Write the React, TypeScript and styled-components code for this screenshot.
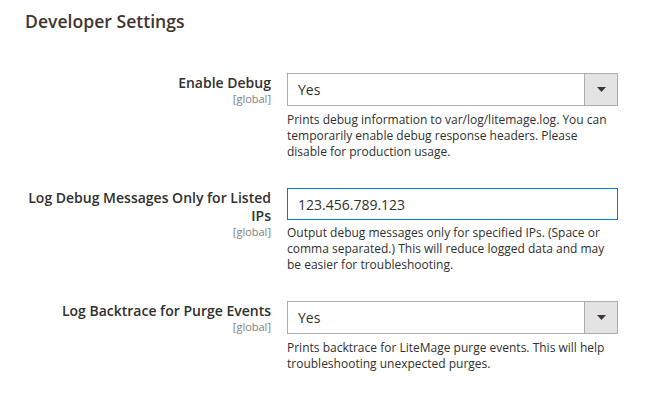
import React from "react";
import styled, { createGlobalStyle } from "styled-components";

const Global = createGlobalStyle`
  html, body { margin: 0; padding: 0; background: #ffffff; }
  body { font-family: "Open Sans", "Liberation Sans", sans-serif; color: #303030; }
  * { box-sizing: border-box; }
`;

const Page = styled.div`
  width: 648px;
  padding: 11px 0 0 25px;
`;

const Title = styled.h2`
  margin: 0;
  font-size: 17.6px;
  line-height: 20px;
  font-weight: 600;
  color: #41362f;
`;

const Fields = styled.div`
  display: flex;
  flex-direction: column;
  gap: 28px;
  margin-top: 42px;
`;

const Row = styled.div`
  display: grid;
  grid-template-columns: 246px 331px;
  column-gap: 16px;
  align-items: start;
`;

const LabelCol = styled.div`
  display: flex;
  flex-direction: column;
  align-items: flex-end;
  text-align: right;
  padding-top: 1px;
`;

const Label = styled.label`
  font-size: 14px;
  line-height: 18px;
  font-weight: 600;
  color: #303030;
`;

const Scope = styled.span`
  font-size: 11px;
  line-height: 12px;
  margin-top: 1px;
  color: #808080;
`;

const Control = styled.div`
  display: flex;
  flex-direction: column;
`;

const SelectWrap = styled.div`
  position: relative;
  width: 331px;
  height: 33px;
`;

const Select = styled.select`
  appearance: none;
  -webkit-appearance: none;
  width: 100%;
  height: 33px;
  margin: 0;
  padding: 0 40px 0 10px;
  border: 1px solid #adadad;
  border-radius: 0;
  background: #ffffff;
  font-family: "Open Sans", "Liberation Sans", sans-serif;
  font-size: 14px;
  color: #303030;
  outline: none;
`;

const ArrowBox = styled.span`
  position: absolute;
  top: 1px;
  right: 1px;
  bottom: 1px;
  width: 33px;
  border-left: 1px solid #adadad;
  background: #e3e3e3;
  display: flex;
  align-items: center;
  justify-content: center;
  pointer-events: none;
`;

const Input = styled.input<{ $focused?: boolean }>`
  width: 331px;
  height: 32px;
  margin: 0;
  padding: 0 10px;
  border: 1px solid ${(p) => (p.$focused ? "#007bdb" : "#adadad")};
  border-radius: 0;
  font-family: "Open Sans", "Liberation Sans", sans-serif;
  font-size: 14px;
  color: #303030;
  outline: none;
`;

const Note = styled.div<{ $gap: number }>`
  margin-top: ${(p) => p.$gap}px;
  width: 331px;
  font-size: 12px;
  line-height: 16px;
  color: #303030;
`;

const Arrow = () => (
  <svg width="9" height="5" viewBox="0 0 9 5">
    <path d="M0 0 H9 L4.5 5 Z" fill="#41362f" />
  </svg>
);

const SelectField: React.FC<{ value: string }> = ({ value }) => (
  <SelectWrap>
    <Select defaultValue={value}>
      <option>Yes</option>
      <option>No</option>
    </Select>
    <ArrowBox>
      <Arrow />
    </ArrowBox>
  </SelectWrap>
);

type Field = {
  label: string;
  kind: "select" | "input";
  value: string;
  note: string;
};

const fields: Field[] = [
  {
    label: "Enable Debug",
    kind: "select",
    value: "Yes",
    note: "Prints debug information to var/log/litemage.log. You can temporarily enable debug response headers. Please disable for production usage.",
  },
  {
    label: "Log Debug Messages Only for Listed IPs",
    kind: "input",
    value: "123.456.789.123",
    note: "Output debug messages only for specified IPs. (Space or comma separated.) This will reduce logged data and may be easier for troubleshooting.",
  },
  {
    label: "Log Backtrace for Purge Events",
    kind: "select",
    value: "Yes",
    note: "Prints backtrace for LiteMage purge events. This will help troubleshooting unexpected purges.",
  },
];

export default function App() {
  return (
    <>
      <Global />
      <Page>
        <Title>Developer Settings</Title>
        <Fields>
          {fields.map((f) => (
            <Row key={f.label}>
              <LabelCol>
                <Label>{f.label}</Label>
                <Scope>[global]</Scope>
              </LabelCol>
              <Control>
                {f.kind === "select" ? (
                  <SelectField value={f.value} />
                ) : (
                  <Input $focused defaultValue={f.value} />
                )}
                <Note $gap={f.kind === "select" ? 6 : 5}>{f.note}</Note>
              </Control>
            </Row>
          ))}
        </Fields>
      </Page>
    </>
  );
}
